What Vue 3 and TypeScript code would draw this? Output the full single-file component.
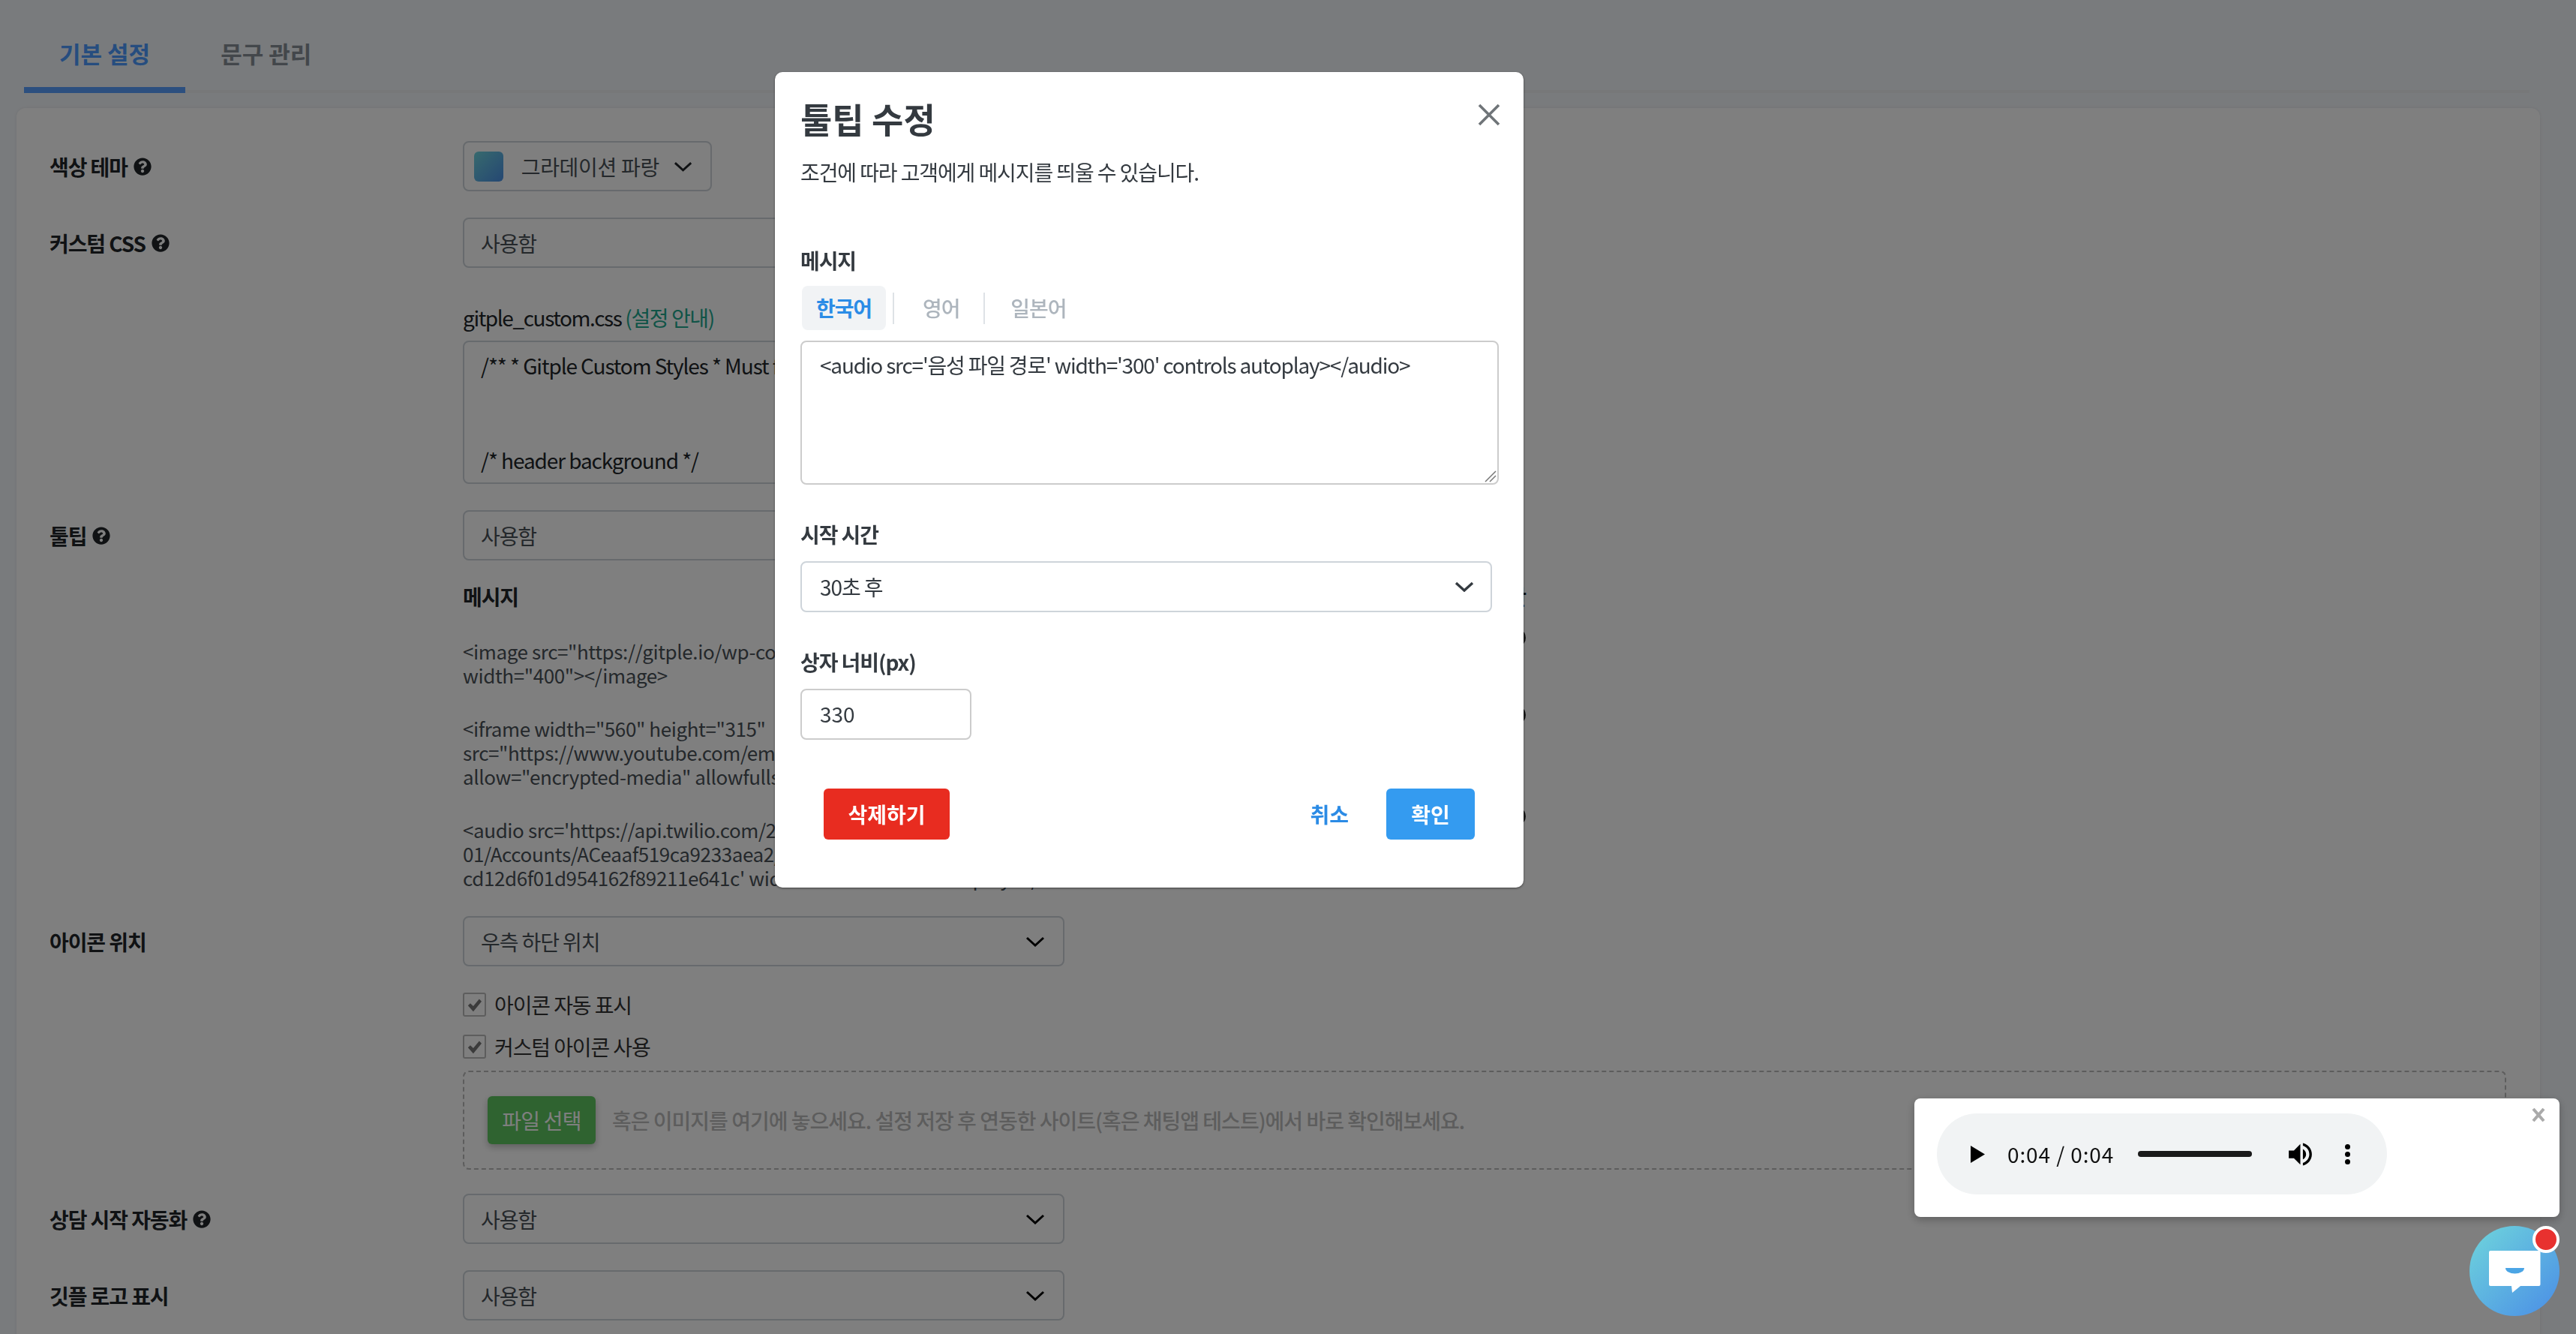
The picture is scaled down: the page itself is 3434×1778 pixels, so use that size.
<template>
  <div class="page">
    <nav class="tabs">
      <a class="tab tab--active">기본 설정</a>
      <a class="tab">문구 관리</a>
    </nav>

    <section class="panel">
      <div class="row">
        <div class="label">색상 테마 <HelpIcon /></div>
        <div class="field">
          <div class="select select--theme">
            <span class="swatch" />
            <span>그라데이션 파랑</span>
            <svg class="chevron" viewBox="0 0 26 14" fill="none"><path d="M2 2l11 10L24 2" stroke="currentColor" stroke-width="3" /></svg>
          </div>
        </div>
      </div>

      <div class="row">
        <div class="label">커스텀 CSS <HelpIcon /></div>
        <div class="field">
          <div class="select">
            <span>사용함</span>
            <svg class="chevron" viewBox="0 0 26 14" fill="none"><path d="M2 2l11 10L24 2" stroke="currentColor" stroke-width="3" /></svg>
          </div>
          <div class="css-name">gitple_custom.css <span class="css-link">(설정 안내)</span></div>
          <div class="css-box">
            <pre class="css-code">{{ cssSample }}</pre>
          </div>
        </div>
      </div>

      <div class="row">
        <div class="label">툴팁 <HelpIcon /></div>
        <div class="field">
          <div class="select">
            <span>사용함</span>
            <svg class="chevron" viewBox="0 0 26 14" fill="none"><path d="M2 2l11 10L24 2" stroke="currentColor" stroke-width="3" /></svg>
          </div>
          <div class="tips">
            <div class="tips__head">
              <span>메시지</span>
              <span>시작 시간</span>
            </div>
            <div v-for="tip in tips" :key="tip[0]" class="tips__row">
              <div class="tips__text">
                <div v-for="line in tip" :key="line">{{ line }}</div>
              </div>
              <span class="tips__dot" />
            </div>
          </div>
        </div>
      </div>

      <div class="row row--icon">
        <div class="label">아이콘 위치</div>
        <div class="field field--wide">
          <div class="select">
            <span>우측 하단 위치</span>
            <svg class="chevron" viewBox="0 0 26 14" fill="none"><path d="M2 2l11 10L24 2" stroke="currentColor" stroke-width="3" /></svg>
          </div>
          <label v-for="name in checks" :key="name" class="check">
            <span class="check__box">
              <svg viewBox="0 0 24 24"><path d="M1 13l4-4 5 5L20 2l4 4L10 23z" fill="currentColor" /></svg>
            </span>
            {{ name }}
          </label>
          <div class="drop">
            <button class="file-btn" type="button">파일 선택</button>
            <span class="drop__hint">혹은 이미지를 여기에 놓으세요. 설정 저장 후 연동한 사이트(혹은 채팅앱 테스트)에서 바로 확인해보세요.</span>
          </div>
        </div>
      </div>

      <div class="row">
        <div class="label">상담 시작 자동화 <HelpIcon /></div>
        <div class="field">
          <div class="select">
            <span>사용함</span>
            <svg class="chevron" viewBox="0 0 26 14" fill="none"><path d="M2 2l11 10L24 2" stroke="currentColor" stroke-width="3" /></svg>
          </div>
        </div>
      </div>

      <div class="row">
        <div class="label">깃플 로고 표시</div>
        <div class="field">
          <div class="select">
            <span>사용함</span>
            <svg class="chevron" viewBox="0 0 26 14" fill="none"><path d="M2 2l11 10L24 2" stroke="currentColor" stroke-width="3" /></svg>
          </div>
        </div>
      </div>
    </section>

    <div class="backdrop" />

    <!-- Edit dialog -->
    <div class="modal">
      <svg class="modal__close" viewBox="0 0 30 30" fill="none">
        <path d="M2 2l26 26M28 2L2 28" stroke="currentColor" stroke-width="3.6" />
      </svg>
      <h2 class="modal__title">툴팁 수정</h2>
      <p class="modal__desc">조건에 따라 고객에게 메시지를 띄울 수 있습니다.</p>

      <div class="modal__label modal__label--first">메시지</div>
      <div class="langs">
        <span
          v-for="(lang, i) in langs"
          :key="lang"
          class="lang"
          :class="{ 'lang--active': i === 0 }"
        >{{ lang }}</span>
      </div>
      <div class="modal__area">
        <textarea class="modal__textarea" :value="message" spellcheck="false" />
        <!-- Resize grip, drawn at the size of the reference -->
        <svg class="modal__grip" viewBox="0 0 16 16" fill="none">
          <path d="M1 15L15 1M7 15l8-8" stroke="#777" stroke-width="1.5" />
        </svg>
      </div>

      <div class="modal__label">시작 시간</div>
      <div class="modal__select">
        <span>30초 후</span>
        <svg class="modal__chevron" viewBox="0 0 26 14" fill="none"><path d="M2 2l11 10L24 2" stroke="currentColor" stroke-width="3.4" /></svg>
      </div>

      <div class="modal__label">상자 너비(px)</div>
      <input class="modal__input" value="330" />

      <div class="modal__footer">
        <button class="btn btn--danger" type="button">삭제하기</button>
        <div class="modal__actions">
          <button class="btn-link" type="button">취소</button>
          <button class="btn btn--primary" type="button">확인</button>
        </div>
      </div>
    </div>

    <!-- Chat tooltip with the audio player -->
    <div class="tooltip">
      <svg class="tooltip__close" viewBox="0 0 18 18" fill="none">
        <path d="M2 1l14 16M16 1L2 17" stroke="currentColor" stroke-width="4" />
      </svg>
      <div class="player">
        <svg class="player__play" viewBox="0 0 19 23"><path d="M0 0l19 11.5L0 23z" fill="#000" /></svg>
        <span class="player__time">0:04 / 0:04</span>
        <span class="player__bar" />
        <svg class="player__volume" viewBox="0 0 24 24">
          <path fill="#000" d="M3 9v6h4l5 5V4L7 9H3zm13.5 3c0-1.77-1.02-3.29-2.5-4.03v8.05c1.48-.73 2.5-2.25 2.5-4.02zM14 3.23v2.06c2.89.86 5 3.54 5 6.71s-2.11 5.85-5 6.71v2.06c4.01-.91 7-4.49 7-8.77s-2.99-7.86-7-8.77z" />
        </svg>
        <span class="player__more"><i /><i /><i /></span>
      </div>
    </div>

    <div class="launcher">
      <svg viewBox="0 0 120 120">
        <path d="M26 35a2 2 0 0 1 2-2h64.500a2 2 0 0 1 2 2v43a2 2 0 0 1-2 2H68l-11 9 -1-9H28a2 2 0 0 1-2-2z" fill="#fff" />
        <path d="M48 56h25a12.500 7.500 0 0 1-25 0z" fill="#4ba5e5" />
      </svg>
      <span class="launcher__badge" />
    </div>
  </div>
</template>

<script setup lang="ts">
import { defineComponent, h } from 'vue';

// FontAwesome style question circle next to the labels
const HelpIcon = defineComponent({
  render() {
    return h('svg', { viewBox: '0 0 512 512', width: 24, height: 24, style: 'flex:none' }, [
      h('path', {
        fill: '#212529',
        d: 'M504 256c0 136.997-111.043 248-248 248S8 392.997 8 256C8 119.083 119.043 8 256 8s248 111.083 248 248zM262.655 90c-54.497 0-89.255 22.957-116.549 63.758-3.536 5.286-2.353 12.415 2.715 16.258l34.699 26.31c5.205 3.947 12.621 3.008 16.665-2.122 17.864-22.658 30.113-35.797 57.303-35.797 20.429 0 45.698 13.148 45.698 32.958 0 14.976-12.363 22.667-32.534 33.976C247.128 238.528 216 254.941 216 296v4c0 6.627 5.373 12 12 12h56c6.627 0 12-5.373 12-12v-1.333c0-28.462 83.186-29.647 83.186-106.667 0-58.002-60.165-102-116.531-102zM256 338c-25.365 0-46 20.635-46 46 0 25.364 20.635 46 46 46s46-20.636 46-46c0-25.365-20.635-46-46-46z',
      }),
    ]);
  },
});

const cssSample = `/** * Gitple Custom Styles * Must follow the rules below


/* header background */
.gitple-header { background: #4a8fe6; }`;

const tips: string[][] = [
  ['<image src="https://gitple.io/wp-content/uploads/2019/05/chat.png"', 'width="400"></image>'],
  ['<iframe width="560" height="315"', 'src="https://www.youtube.com/embed/video"', 'allow="encrypted-media" allowfullscreen></iframe>'],
  [
    "<audio src='https://api.twilio.com/2010-04-",
    '01/Accounts/ACeaaf519ca9233aea2/Recordings/RE',
    "cd12d6f01d954162f89211e641c' width='300' controls autoplay></audio>",
  ],
];

const checks = ['아이콘 자동 표시', '커스텀 아이콘 사용'];
const langs = ['한국어', '영어', '일본어'];
const message = "<audio src='음성 파일 경로' width='300' controls autoplay></audio>";
</script>

<style>
html,
body {
  height: 100%;
  margin: 0;
  overflow: hidden;
  background: #f3f6fa;
}
</style>

<style scoped>
.page {
  font-family: "Noto Sans CJK KR", "Noto Sans", sans-serif;
  font-size: 28px;
  line-height: 42px;
  letter-spacing: -1.1px;
  color: #333;
}

/* Top tabs */
.tabs {
  display: flex;
  margin: 0 62px 0 32px;
  padding-top: 44px;
  height: 76px;
  border-bottom: 4px solid #eef0f3;
}

.tab {
  height: 80px;
  padding: 0 47px;
  box-sizing: border-box;
  font-size: 31px;
  font-weight: 700;
  line-height: 54px;
  letter-spacing: 0;
  color: #868e96;
}

.tab--active {
  color: #4c9bff;
  border-bottom: 8px solid #589fff;
}

/* Settings panel */
.panel {
  margin: 20px 48px 0 22px;
  padding: 44px 0 60px 44px;
  background: #fff;
  border-radius: 12px;
  box-shadow: 0 0 4px rgba(0, 0, 0, 0.08);
}

.row {
  display: flex;
  margin-bottom: 35px;
}

.row--icon {
  margin-bottom: 32px;
}

.label {
  display: flex;
  align-items: center;
  gap: 8px;
  flex: none;
  width: 551px;
  height: 67px;
  font-weight: 700;
  color: #212529;
}

.field {
  flex: 1;
  padding-right: 45px;
}

.select {
  display: flex;
  align-items: center;
  justify-content: space-between;
  box-sizing: border-box;
  width: 802px;
  height: 67px;
  padding: 0 24px 0 22px;
  border: 2px solid #ced4da;
  border-radius: 8px;
  color: #495057;
  white-space: nowrap;
}

.select .chevron {
  width: 26px;
  height: 14px;
  color: #000;
}

.select--theme {
  width: 332px;
  padding-left: 13px;
  justify-content: flex-start;
  letter-spacing: -0.3px;
}

.swatch {
  width: 40px;
  height: 40px;
  margin-right: 24px;
  border-radius: 6px;
  background: linear-gradient(135deg, #6fd4dc, #4a8fe6);
}

.select--theme .chevron {
  margin-left: 19px;
  color: #212529;
}

.css-name {
  margin-top: 45px;
  margin-bottom: 10px;
  letter-spacing: -1.4px;
  color: #212529;
}

.css-link {
  color: #20a88f;
}

.css-box {
  box-sizing: border-box;
  width: 802px;
  height: 191px;
  padding: 10px 22px;
  overflow: hidden;
  border: 2px solid #ced4da;
  border-radius: 8px;
}

.css-code {
  margin: 0;
  font: inherit;
  color: #212529;
}

/* Tooltip list, the right part lies under the dialog */
.tips {
  width: 1417px;
  margin-top: 27px;
  font-size: 26px;
  line-height: 32px;
  letter-spacing: -0.4px;
}

.tips__head {
  display: flex;
  justify-content: space-between;
  height: 42px;
  margin-bottom: 36px;
  font-size: 28px;
  line-height: 42px;
  letter-spacing: -1.1px;
  font-weight: 700;
  color: #212529;
}

.tips__row {
  display: flex;
  justify-content: space-between;
  margin-bottom: 39px;
  color: #495057;
}

.tips__row:last-child {
  margin-bottom: 0;
}

.tips__text {
  white-space: nowrap;
}

.tips__dot {
  flex: none;
  width: 24px;
  height: 24px;
  margin-top: -14px;
  border-radius: 50%;
  background: #333;
}

.field--wide {
  padding-right: 0;
}

.check {
  display: flex;
  align-items: center;
  gap: 11px;
  height: 32px;
  margin-top: 24px;
  color: #333;
}

.select + .check {
  margin-top: 35px;
}

.check__box {
  box-sizing: border-box;
  display: flex;
  align-items: center;
  justify-content: center;
  width: 31px;
  height: 32px;
  border: 2px solid #bbb;
  border-radius: 3px;
  color: #777;
}

.check__box svg {
  width: 21px;
  height: 19px;
}

.drop {
  display: flex;
  align-items: center;
  gap: 22px;
  box-sizing: border-box;
  width: 2724px;
  height: 132px;
  margin-top: 16px;
  padding-left: 31px;
  border: 2px dashed #bbb;
  border-radius: 8px;
}

.file-btn {
  width: 144px;
  height: 64px;
  padding: 0;
  border: none;
  border-radius: 6px;
  font: inherit;
  letter-spacing: -0.8px;
  color: #fff;
  background: #5ec661;
  box-shadow: 0 4px 10px rgba(0, 0, 0, 0.25);
}

.drop__hint {
  font-weight: 500;
  color: #bbb;
  white-space: nowrap;
  letter-spacing: -1px;
}

/* Overlay */
.backdrop {
  position: fixed;
  inset: 0;
  background: rgba(0, 0, 0, 0.5);
}

/* Dialog */
.modal {
  position: fixed;
  left: 1033px;
  top: 96px;
  box-sizing: border-box;
  width: 998px;
  height: 1087px;
  padding: 33px 33px 0 34px;
  border-radius: 10px;
  background: #fff;
  box-shadow: 0 1px 3px rgba(0, 0, 0, 0.5);
  color: #343a40;
}

.modal__close {
  position: absolute;
  right: 31px;
  top: 42px;
  width: 30px;
  height: 30px;
  color: #6f7478;
}

.modal__title {
  margin: 0;
  font-size: 46px;
  line-height: 56px;
  letter-spacing: 0;
  font-weight: 700;
}

.modal__desc {
  margin: 23px 0 0;
  color: #343a40;
}

.modal__label {
  margin-top: 45px;
  font-weight: 700;
  color: #343a40;
}

.modal__label--first {
  margin-top: 76px;
}

.langs {
  display: flex;
  align-items: center;
  height: 59px;
  margin: 13px 0 14px 2px;
  color: #adb5bd;
}

.lang {
  position: relative;
  height: 59px;
  padding: 0 19px;
  line-height: 58px;
  font-weight: 500;
  border-radius: 8px;
}

.lang + .lang {
  margin-left: 30px;
}

.lang:not(:last-child)::after {
  content: '';
  position: absolute;
  right: -11px;
  top: 9px;
  height: 42px;
  border-right: 2px solid #dee2e6;
}

.lang + .lang::after {
  right: -15px !important;
}

.lang--active {
  color: #2b8ce6;
  background: #f1f3f5;
  font-weight: 700;
}

.modal__area {
  position: relative;
  width: 931px;
}

.modal__textarea {
  display: block;
  box-sizing: border-box;
  width: 931px;
  height: 192px;
  padding: 9px 24px;
  border: 2px solid #ccc;
  border-radius: 8px;
  outline: none;
  resize: none;
  font: inherit;
  letter-spacing: -1.2px;
  color: #343a40;
}

.modal__grip {
  position: absolute;
  right: 3px;
  bottom: 3px;
  width: 16px;
  height: 16px;
}

.modal__select {
  display: flex;
  align-items: center;
  justify-content: space-between;
  box-sizing: border-box;
  width: 922px;
  height: 68px;
  margin-top: 15px;
  padding: 0 22px 0 24px;
  border: 2px solid #ced4da;
  border-radius: 8px;
}

.modal__chevron {
  width: 26px;
  height: 14px;
  color: #343a40;
}

.modal__input {
  display: block;
  box-sizing: border-box;
  width: 228px;
  height: 68px;
  margin-top: 15px;
  padding: 0 24px 2px;
  border: 2px solid #ccc;
  border-radius: 8px;
  outline: none;
  font: inherit;
  color: #343a40;
}

.modal__footer {
  display: flex;
  justify-content: space-between;
  margin: 65px 32px 0 31px;
}

.modal__actions {
  display: flex;
  align-items: center;
  gap: 50px;
}

.btn {
  height: 68px;
  padding: 0;
  border: none;
  border-radius: 6px;
  font: inherit;
  font-weight: 700;
  color: #fff;
}

.btn--danger {
  width: 168px;
  background: #e82c20;
}

.btn--primary {
  width: 118px;
  background: #349bf0;
}

.btn-link {
  padding: 0;
  border: none;
  background: none;
  font: inherit;
  font-weight: 700;
  color: #2b8be5;
}

/* Chat tooltip */
.tooltip {
  position: fixed;
  left: 2552px;
  top: 1464px;
  box-sizing: border-box;
  width: 860px;
  height: 158px;
  padding: 20px 30px;
  border-radius: 8px;
  background: #fff;
  box-shadow: 0 4px 12px rgba(0, 0, 0, 0.25);
}

.tooltip__close {
  position: absolute;
  right: 19px;
  top: 13px;
  width: 18px;
  height: 18px;
  color: #aaa;
}

.player {
  display: flex;
  align-items: center;
  width: 600px;
  height: 108px;
  padding-left: 45px;
  box-sizing: border-box;
  border-radius: 54px;
  background: #f1f3f4;
  color: #111;
}

.player__play {
  width: 19px;
  height: 23px;
}

.player__time {
  width: 142px;
  margin-left: 30px;
  letter-spacing: 0.9px;
  white-space: nowrap;
}

.player__bar {
  width: 152px;
  height: 8px;
  margin-left: 32px;
  border-radius: 4px;
  background: #1a1a1a;
}

.player__volume {
  width: 41px;
  height: 41px;
  margin-left: 44px;
}

.player__more {
  display: flex;
  flex-direction: column;
  gap: 3px;
  margin-left: 39px;
}

.player__more i {
  width: 7px;
  height: 7px;
  border-radius: 50%;
  background: #000;
}

/* Chat launcher */
.launcher {
  position: fixed;
  left: 3292px;
  top: 1634px;
  width: 120px;
  height: 120px;
  border-radius: 50%;
  background: linear-gradient(135deg, #6fd6dc, #4a8de6);
}

.launcher svg {
  display: block;
  width: 120px;
  height: 120px;
}

.launcher__badge {
  position: absolute;
  right: 0;
  top: 0;
  box-sizing: border-box;
  width: 36px;
  height: 36px;
  border: 4px solid #fff;
  border-radius: 50%;
  background: #e8312f;
}
</style>
